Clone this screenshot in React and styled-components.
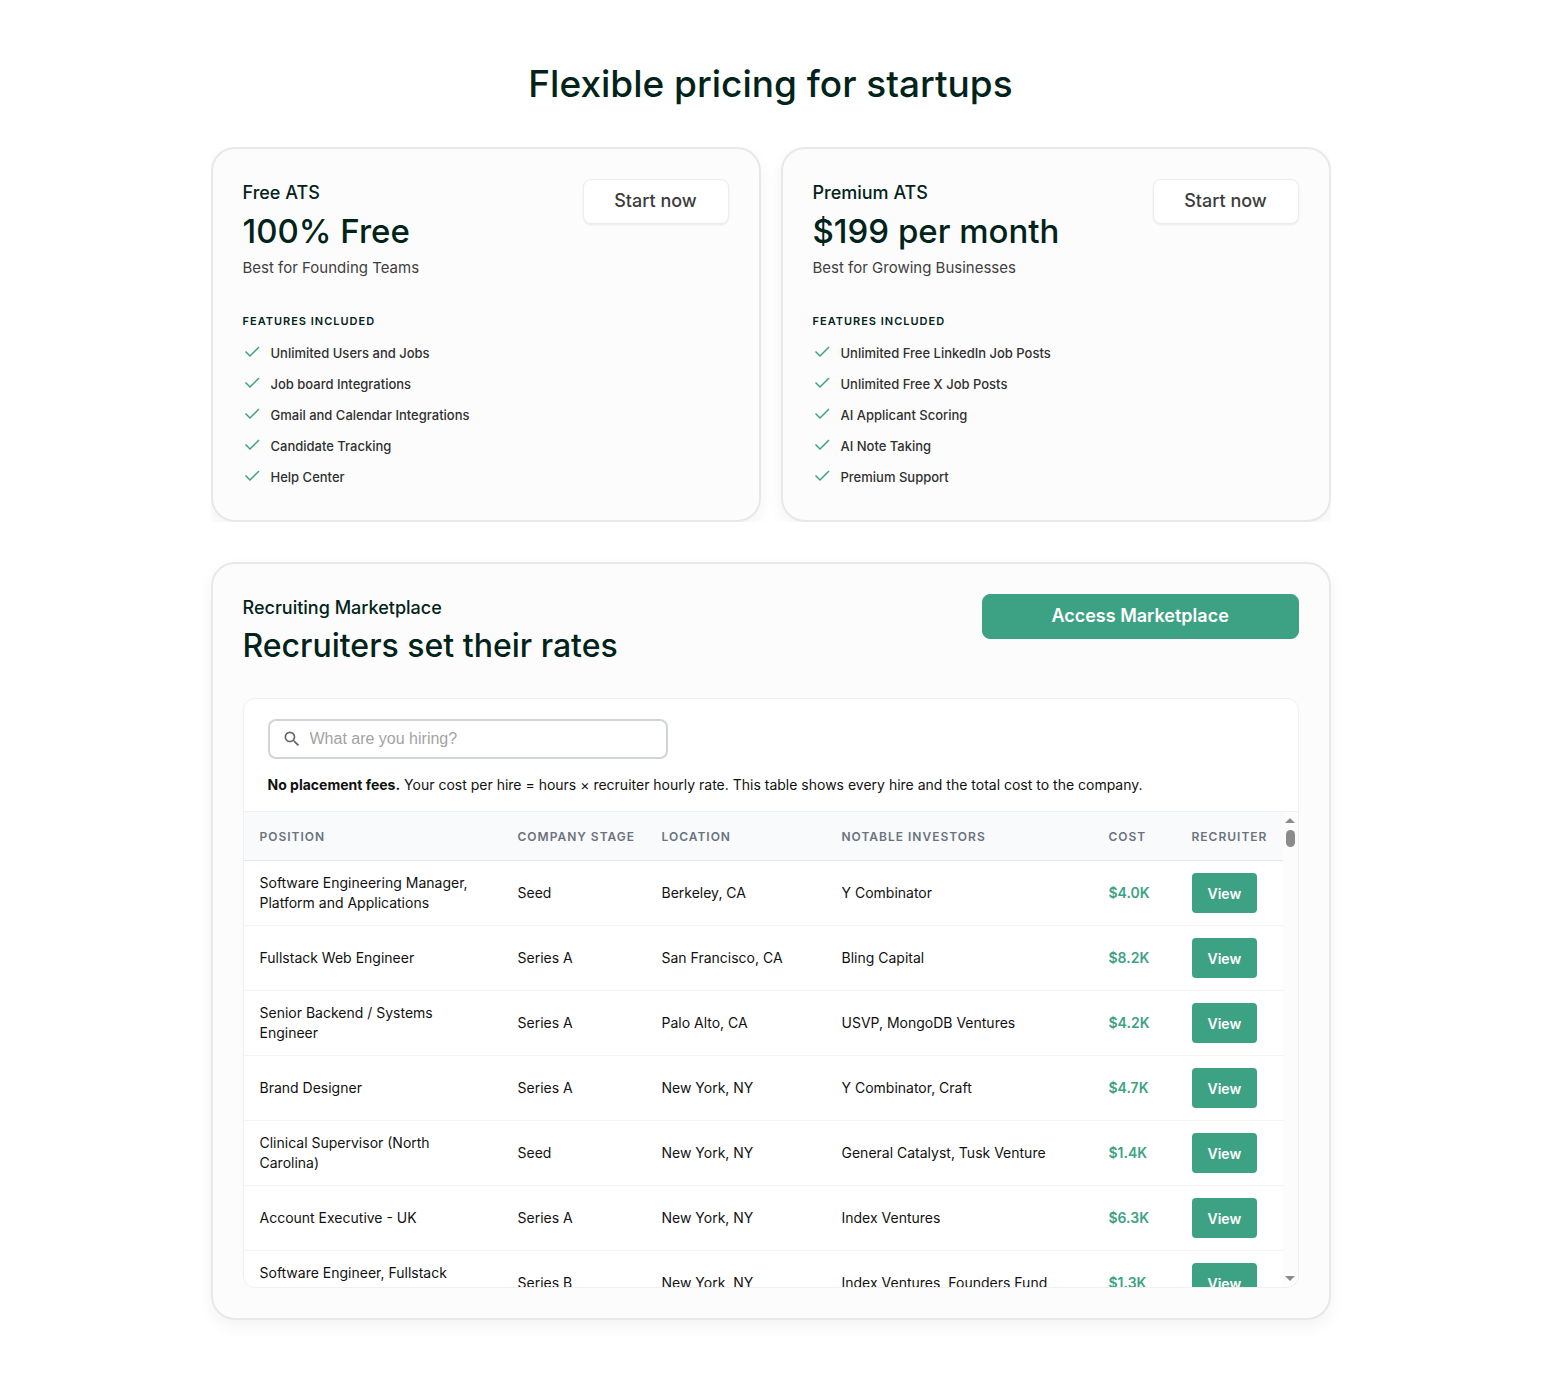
import React from 'react';
import styled, { createGlobalStyle } from 'styled-components';

const plans = [
   {
      name: 'Free ATS',
      price: '100% Free',
      tagline: 'Best for Founding Teams',
      features: [
         'Unlimited Users and Jobs',
         'Job board Integrations',
         'Gmail and Calendar Integrations',
         'Candidate Tracking',
         'Help Center',
      ],
   },
   {
      name: 'Premium ATS',
      price: '$199 per month',
      tagline: 'Best for Growing Businesses',
      features: [
         'Unlimited Free LinkedIn Job Posts',
         'Unlimited Free X Job Posts',
         'AI Applicant Scoring',
         'AI Note Taking',
         'Premium Support',
      ],
   },
];

const hires = [
   ['Software Engineering Manager, Platform and Applications', 'Seed', 'Berkeley, CA', 'Y Combinator', '$4.0K'],
   ['Fullstack Web Engineer', 'Series A', 'San Francisco, CA', 'Bling Capital', '$8.2K'],
   ['Senior Backend / Systems Engineer', 'Series A', 'Palo Alto, CA', 'USVP, MongoDB Ventures', '$4.2K'],
   ['Brand Designer', 'Series A', 'New York, NY', 'Y Combinator, Craft', '$4.7K'],
   ['Clinical Supervisor (North Carolina)', 'Seed', 'New York, NY', 'General Catalyst, Tusk Venture', '$1.4K'],
   ['Account Executive - UK', 'Series A', 'New York, NY', 'Index Ventures', '$6.3K'],
   ['Software Engineer, Fullstack\n\u00a0', 'Series B', 'New York, NY', 'Index Ventures, Founders Fund', '$1.3K'],
];

const CheckIcon = () => (
   <svg width="20" height="20" viewBox="0 0 20 20" fill="none" aria-hidden="true">
      <path d="M2.5 8.5 7 13 16 4" stroke="#3da283" strokeWidth="1.5" />
   </svg>
);

const SearchIcon = () => (
   <svg width="20" height="20" viewBox="0 0 24 24" fill="#666" aria-hidden="true">
      <path d="M15.5 14h-.79l-.28-.27A6.47 6.47 0 0 0 16 9.5 6.5 6.5 0 1 0 9.5 16c1.61 0 3.09-.59 4.23-1.57l.27.28v.79l5 4.99L20.49 19l-4.99-5zm-6 0C7.01 14 5 11.99 5 9.5S7.01 5 9.5 5 14 7.01 14 9.5 11.99 14 9.5 14z" />
   </svg>
);

const PlanCard = ({ plan }) => (
   <Card as="article">
      <CardTop>
         <div>
            <PlanName>{plan.name}</PlanName>
            <Price>{plan.price}</Price>
            <Tagline>{plan.tagline}</Tagline>
         </div>
         <StartButton type="button">Start now</StartButton>
      </CardTop>
      <FeaturesTitle>Features included</FeaturesTitle>
      <FeatureList>
         {plan.features.map((feature) => (
            <Feature key={feature}>
               <CheckIcon />
               {feature}
            </Feature>
         ))}
      </FeatureList>
   </Card>
);

const HiresTable = () => (
   <TableArea>
      <Scroller>
         <Table>
            <colgroup>
               <Col />
               <Col $width={144} />
               <Col $width={180} />
               <Col $width={267} />
               <Col $width={83} />
               <Col $width={107} />
            </colgroup>
            <thead>
               <tr>
                  <Th scope="col">Position</Th>
                  <Th scope="col">Company Stage</Th>
                  <Th scope="col">Location</Th>
                  <Th scope="col">Notable Investors</Th>
                  <Th scope="col">Cost</Th>
                  <Th scope="col">Recruiter</Th>
               </tr>
            </thead>
            <tbody>
               {hires.map(([position, stage, location, investors, cost]) => (
                  <tr key={position}>
                     <Td>{position}</Td>
                     <Td>{stage}</Td>
                     <Td>{location}</Td>
                     <Td>{investors}</Td>
                     <CostTd>{cost}</CostTd>
                     <Td>
                        <ViewButton type="button">View</ViewButton>
                     </Td>
                  </tr>
               ))}
            </tbody>
         </Table>
      </Scroller>
      <ScrollTrack aria-hidden="true">
         <svg width="10" height="5" viewBox="0 0 10 5" fill="#8b8b8b">
            <path d="M0 5 5 0l5 5z" />
         </svg>
         <ScrollThumb />
         <svg width="10" height="5" viewBox="0 0 10 5" fill="#8b8b8b">
            <path d="M0 0h10L5 5z" />
         </svg>
      </ScrollTrack>
   </TableArea>
);

const App = () => (
   <>
      <GlobalStyle />
      <Page>
         <Title>Flexible pricing for startups</Title>
         <Plans>
            {plans.map((plan) => (
               <PlanCard key={plan.name} plan={plan} />
            ))}
         </Plans>
         <Card>
            <CardTop>
               <div>
                  <PlanName>Recruiting Marketplace</PlanName>
                  <Headline>Recruiters set their rates</Headline>
               </div>
               <AccessButton type="button">Access Marketplace</AccessButton>
            </CardTop>
            <Panel>
               <PanelHead>
                  <SearchBox>
                     <SearchIcon />
                     <SearchInput type="text" placeholder="What are you hiring?" aria-label="What are you hiring?" />
                  </SearchBox>
                  <Note>
                     <strong>No placement fees.</strong> Your cost per hire = hours × recruiter hourly rate. This table
                     shows every hire and the total cost to the company.
                  </Note>
               </PanelHead>
               <HiresTable />
            </Panel>
         </Card>
      </Page>
   </>
);

export default App;

const GlobalStyle = createGlobalStyle`
   * {
      box-sizing: border-box;
   }
   body {
      margin: 0;
      background: #fff;
      color: #111;
      font-family: Inter, 'Liberation Sans', sans-serif;
   }
   h1, h2, h3, p, ul {
      margin: 0;
      padding: 0;
   }
   button {
      font-family: inherit;
      cursor: pointer;
   }
`;

const Page = styled.main`
   max-width: 1160px;
   margin: 0 auto;
   padding: 60px 20px;
`;

const Title = styled.h1`
   margin-bottom: 39px;
   color: #02231a;
   font-size: 37px;
   font-weight: 500;
   line-height: 48px;
   text-align: center;
`;

const Plans = styled.div`
   display: grid;
   grid-template-columns: 1fr 1fr;
   gap: 20px;
   margin-bottom: 40px;
   overflow: hidden;
   @media (max-width: 768px) {
      grid-template-columns: 1fr;
   }
`;

const Card = styled.section`
   padding: 30px;
   border: 2px solid #e8e8e8;
   border-radius: 24px;
   background: #fcfcfc;
   box-shadow: 0 6px 16px rgba(0, 0, 0, 0.05);
`;

const CardTop = styled.div`
   display: flex;
   justify-content: space-between;
   align-items: flex-start;
   gap: 20px;
`;

const PlanName = styled.h2`
   color: #02231a;
   font-size: 18px;
   font-weight: 500;
   line-height: 28px;
`;

const Price = styled.p`
   color: #02231a;
   font-size: 33px;
   font-weight: 500;
   line-height: 48px;
`;

const Headline = styled(Price)`
   font-size: 32px;
`;

const Tagline = styled.p`
   color: #404040;
   font-size: 15px;
   line-height: 26px;
`;

const Button = styled.button`
   height: 45px;
   padding: 0 28px 3px;
   border: 1px solid #ededed;
   border-radius: 8px;
   font-size: 18px;
   font-weight: 500;
`;

const StartButton = styled(Button)`
   min-width: 146px;
   background: #fff;
   color: #3c3c3c;
   box-shadow: 0 1px 2px rgba(0, 0, 0, 0.08);
`;

const AccessButton = styled(Button)`
   width: 30%;
   border-color: #3da283;
   background: #3da283;
   color: #fff;
   font-weight: 600;
`;

const FeaturesTitle = styled.h3`
   margin-top: 30px;
   color: #02231a;
   font-size: 11px;
   font-weight: 600;
   letter-spacing: 1px;
   line-height: 20px;
   text-transform: uppercase;
`;

const FeatureList = styled.ul`
   display: grid;
   gap: 11px;
   margin: 12px 0 3px;
   list-style: none;
`;

const Feature = styled.li`
   display: flex;
   align-items: center;
   gap: 8px;
   color: #303030;
   font-size: 13px;
   font-weight: 500;
   line-height: 20px;
`;

const Panel = styled.div`
   margin-top: 28px;
   border: 1px solid #efefef;
   border-radius: 12px;
   background: #fff;
   overflow: hidden;
`;

const PanelHead = styled.div`
   padding: 20px 24px 16px;
   border-bottom: 1px solid #f0f0f0;
`;

const SearchBox = styled.div`
   display: flex;
   align-items: center;
   gap: 8px;
   max-width: 400px;
   height: 40px;
   padding: 0 12px;
   border: 2px solid #d1d5db;
   border-radius: 8px;
`;

const SearchInput = styled.input`
   flex: 1;
   min-width: 0;
   padding: 0;
   border: 0;
   outline: 0;
   background: transparent;
   font-family: 'Liberation Sans', Arial, sans-serif;
   font-size: 16px;
   &::placeholder {
      color: #a3a3a3;
   }
`;

const Note = styled.p`
   margin-top: 16px;
   font-size: 14px;
   line-height: 20px;
`;

const TableArea = styled.div`
   display: flex;
   height: 475px;
`;

const Scroller = styled.div`
   flex: 1;
   min-width: 0;
   overflow: auto;
   scrollbar-width: none;
`;

const ScrollTrack = styled.div`
   display: flex;
   flex-direction: column;
   align-items: center;
   gap: 7px;
   width: 15px;
   padding: 6px 0;
   background: #fcfcfc;
`;

const ScrollThumb = styled.div`
   width: 9px;
   height: 17px;
   margin-bottom: auto;
   border-radius: 5px;
   background: #8b8b8b;
`;

const Table = styled.table`
   width: 100%;
   min-width: 960px;
   table-layout: fixed;
   border-collapse: separate;
   border-spacing: 0;
`;

const Col = styled.col`
   width: ${({ $width }) => ($width ? `${$width}px` : 'auto')};
`;

const Th = styled.th`
   position: sticky;
   top: 0;
   height: 49px;
   padding: 0 16px;
   border-bottom: 1px solid #e5e7eb;
   background: #f9fafb;
   color: #6b7280;
   font-size: 12px;
   font-weight: 600;
   letter-spacing: 1px;
   text-align: left;
   text-transform: uppercase;
   white-space: nowrap;
`;

const Td = styled.td`
   height: 65px;
   padding: 0 16px;
   border-bottom: 1px solid #f3f4f6;
   font-size: 14px;
   line-height: 20px;
   white-space: pre-line;
`;

const CostTd = styled(Td)`
   color: #3da283;
   font-weight: 600;
`;

const ViewButton = styled.button`
   display: block;
   height: 40px;
   padding: 0 16px;
   border: 0;
   border-radius: 4px;
   background: #3da283;
   color: #fff;
   font-size: 14px;
   font-weight: 600;
`;
